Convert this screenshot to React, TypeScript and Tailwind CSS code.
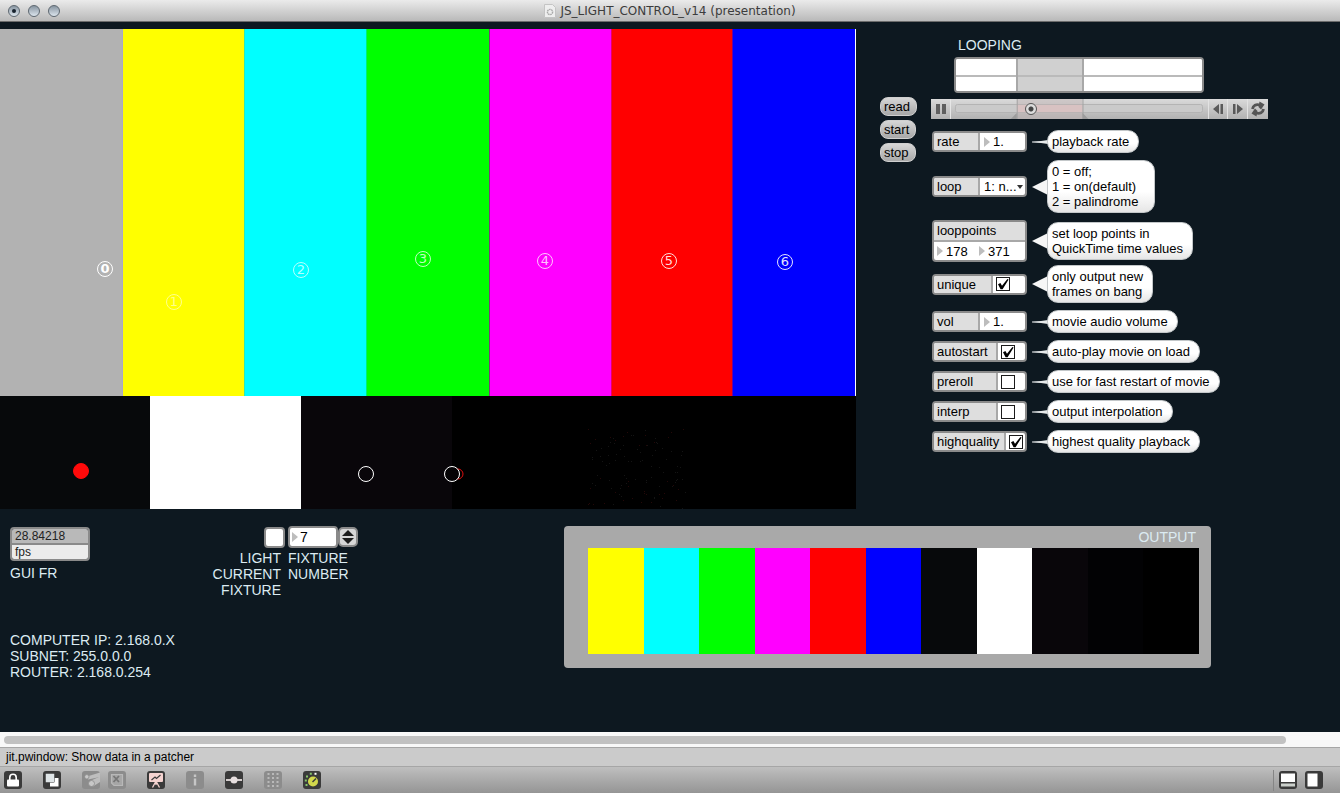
import type { ReactNode } from 'react';

const markers = [
  { label: '0', x: 105, y: 240, tone: 'border-white text-white font-bold' },
  { label: '1', x: 174, y: 273, tone: 'border-[#ffff8c] text-[#ffff8c]' },
  { label: '2', x: 301, y: 241, tone: 'border-[#b4ffff] text-[#b4ffff]' },
  { label: '3', x: 423, y: 230, tone: 'border-[#c0ffc0] text-[#c0ffc0]' },
  { label: '4', x: 545, y: 232, tone: 'border-[#ffc4ff] text-[#ffc4ff]' },
  { label: '5', x: 669, y: 232, tone: 'border-[#ffdcdc] text-[#ffdcdc]' },
  { label: '6', x: 785, y: 233, tone: 'border-[#e4e4ff] text-[#e4e4ff]' },
  { label: '', x: 81, y: 442, tone: 'border-[#ff0a0a] bg-[#ff0a0a]' },
  { label: '', x: 366, y: 445, tone: 'border-white' },
  { label: '', x: 452, y: 445, tone: 'border-white bg-[#040305]' }
];

const outputColors = [
  'bg-[#ffff00]',
  'bg-[#00ffff]',
  'bg-[#00ff00]',
  'bg-[#ff00ff]',
  'bg-[#ff0000]',
  'bg-[#0000ff]',
  'bg-[#07090b]',
  'bg-white',
  'bg-[#09060a]',
  'bg-[#020204]',
  'bg-black'
];

// faint sensor noise in the last tile
const noise = Array.from({ length: 110 }, (_, i) => ({
  x: (i * 37 + ((i * i) % 23)) % 98,
  y: (i * 53 + ((i * i) % 31)) % 80
}));

const frame = 'rounded-[4px] border-2 border-[#8a8a8a]';

const NumberArrow = () => (
  <svg viewBox="0 0 6 10" className="h-[10px] w-[6px] shrink-0" aria-hidden="true">
    <path d="M0 0L6 5L0 10Z" fill="#bdbdbd" />
  </svg>
);

const NumberField = ({ label, value }: { label: string; value: string }) => (
  <span className="flex items-center gap-[3px] pl-[3px]">
    <NumberArrow />
    <input aria-label={label} defaultValue={value} className="w-[30px] bg-transparent leading-[17px] outline-none" />
  </span>
);

const Check = ({ id, checked }: { id: string; checked: boolean }) => (
  <span className="relative block size-[14px]">
    <input
      id={id}
      type="checkbox"
      defaultChecked={checked}
      className="peer block size-[14px] appearance-none border border-[#1a1a1a] bg-white"
    />
    <svg viewBox="0 0 14 14" className="pointer-events-none absolute inset-0 hidden peer-checked:block" aria-hidden="true">
      <path d="M2 7.200L4.400 6L6 8.800L11.400 2L12.600 2.400L6.600 12.200H4.600Z" fill="#000" />
    </svg>
  </span>
);

const Attr = ({ id, name, labelWidth, children }: { id: string; name: string; labelWidth: string; children: ReactNode }) => (
  <div className={`flex h-[21px] w-[95px] shrink-0 overflow-hidden bg-white ${frame}`}>
    <label htmlFor={id} className={`shrink-0 border-r-2 border-[#a8a8a8] bg-[#dedede] pl-[3px] leading-[17px] ${labelWidth}`}>
      {name}
    </label>
    <div className="flex min-w-0 flex-1 items-center">{children}</div>
  </div>
);

const Bubble = ({ lines }: { lines: string[] }) => (
  <div className="flex items-center">
    {lines.length > 1 ? (
      <svg viewBox="0 0 16 16" className="-mr-px h-4 w-4 shrink-0" aria-hidden="true">
        <path d="M0 8L16 0V16Z" fill="#f6f6f6" />
      </svg>
    ) : (
      <svg viewBox="0 0 16 4" className="-mr-px h-1 w-4 shrink-0" aria-hidden="true">
        <path d="M0 1.400L9 1L16 0V4L9 3L0 2.600Z" fill="#e6e9ea" />
      </svg>
    )}
    <p
      className={`rounded-[11px] border border-[#c3c7c9] bg-linear-to-b from-white from-60% to-[#e6e6e6] px-1 py-[3px] leading-[15px] whitespace-nowrap ${lines.length > 2 ? 'pr-4' : 'pr-[9px]'}`}
    >
      {lines.map((line) => (
        <span key={line} className="block">
          {line}
        </span>
      ))}
    </p>
  </div>
);

const CheckAttr = ({ name, labelWidth, checked }: { name: string; labelWidth: string; checked: boolean }) => (
  <Attr id={name} name={name} labelWidth={labelWidth}>
    <span className="pl-[3px]">
      <Check id={name} checked={checked} />
    </span>
  </Attr>
);

const ValueAttr = ({ name, value }: { name: string; value: string }) => (
  <Attr id={name} name={name} labelWidth="w-[46px]">
    <span className="flex items-center gap-[3px] pl-1">
      <NumberArrow />
      <input id={name} defaultValue={value} className="w-7 bg-transparent leading-[17px] outline-none" />
    </span>
  </Attr>
);

const Row = ({ className, lines, children }: { className: string; lines: string[]; children: ReactNode }) => (
  <div className={`flex items-center gap-[5px] ${className}`}>
    {children}
    <Bubble lines={lines} />
  </div>
);

const TitleBar = () => (
  <header className="relative flex h-[22px] items-center justify-center border-b border-[#6c6c6c] bg-linear-to-b from-[#ebebeb] to-[#b9b9b9]">
    <div className="absolute left-2 flex gap-2">
      {['Close', 'Minimize', 'Zoom'].map((name) => (
        <button
          key={name}
          aria-label={name}
          className="flex size-3 items-center justify-center rounded-full border border-[#5d6770] bg-linear-to-b from-[#8895a1] to-[#dde6ee]"
        >
          {name === 'Close' && <span className="size-1 rounded-full bg-[#17222d]" />}
        </button>
      ))}
    </div>
    <svg viewBox="0 0 12 14" className="mr-1 h-[14px] w-3" aria-hidden="true">
      <path d="M.5 .5H8.500L11.500 3.500V13.500H.5Z" fill="#eeeeee" stroke="#c4c4c4" />
      <circle cx="6" cy="8" r="2.600" fill="none" stroke="#a9a9a9" strokeWidth="1.400" strokeDasharray="1.600 .6" />
    </svg>
    <h1 className="font-['DejaVu_Sans',sans-serif] text-[12px] leading-5 text-[#3c3c3c]">JS_LIGHT_CONTROL_v14 (presentation)</h1>
  </header>
);

const Preview = () => (
  <section aria-label="Video preview" className="relative">
    <div className="grid aspect-[856/367] grid-cols-[123fr_121fr_122fr_123fr_122fr_121fr_123fr_1fr]">
      <div className="border-r border-[#aaa8c8] bg-[#b2b2b2]" />
      <div className="bg-[#ffff00]" />
      <div className="border-l border-[#30e8b0] bg-[#00ffff]" />
      <div className="border-l border-[#00f070] bg-[#00ff00]" />
      <div className="border-l border-[#7b3a7b] bg-[#ff00ff]" />
      <div className="border-l border-[#e80068] bg-[#ff0000]" />
      <div className="border-l border-[#780090] bg-[#0000ff]" />
      <div className="bg-white" />
    </div>
    <div className="grid aspect-[856/113] grid-cols-[150fr_151fr_151fr_404fr]">
      <div className="bg-[#07090b]" />
      <div className="bg-white" />
      <div className="bg-[#09060a]" />
      <div className="flex bg-black">
        <svg viewBox="0 0 404 113" className="w-full" aria-hidden="true">
          {noise.map((dot, i) => (
            <rect key={i} x={136 + dot.x} y={33 + dot.y} width="1" height="1" fill={i % 3 ? '#141414' : '#240808'} />
          ))}
        </svg>
      </div>
    </div>
    <span
      className="absolute size-[11px] -translate-x-1/2 -translate-y-1/2 rounded-full border border-[#e01010]"
      style={{ left: `${(458 / 856) * 100}%`, top: `${(445 / 480) * 100}%` }}
    />
    {markers.map((marker) => (
      <span
        key={`${marker.x}-${marker.y}`}
        className={`absolute flex size-4 -translate-x-1/2 -translate-y-1/2 items-center justify-center rounded-full border font-['DejaVu_Sans',sans-serif] text-[13px] leading-3 ${marker.tone}`}
        style={{ left: `${(marker.x / 856) * 100}%`, top: `${(marker.y / 480) * 100}%` }}
      >
        {marker.label}
      </span>
    ))}
  </section>
);

const LoopRange = () => (
  <div className={`ml-[23px] grid h-9 w-[250px] grid-cols-[60fr_68fr_118fr] overflow-hidden bg-white ${frame}`}>
    {['bg-white', 'bg-[#d0d0d0] border-x-2 border-[#a8a8a8]', 'bg-white'].map((tone, i) => (
      <div key={i} className={`grid grid-rows-[18fr_14fr] ${tone}`}>
        <div className="border-b-2 border-[#bababa]" />
      </div>
    ))}
  </div>
);

const Transport = () => (
  <div className="flex h-5 w-[337px] items-stretch bg-linear-to-b from-[#dadada] to-[#b2b2b2]">
    <button aria-label="Pause" className="flex w-5 items-center justify-center border-r border-[#e6e6e6]">
      <svg viewBox="0 0 10 10" className="size-[10px]">
        <path d="M0 0H4V10H0ZM6 0H10V10H6Z" fill="#5f5f5f" />
      </svg>
    </button>
    <div className="relative flex flex-1 items-center px-1">
      <svg viewBox="0 0 258 20" preserveAspectRatio="none" className="absolute inset-0 h-full w-full" aria-hidden="true">
        <rect x="4.500" y="5.500" width="248" height="8" rx="2" fill="#cacaca" stroke="#b4b4b4" />
        <rect x="66" y="0" width="66" height="20" fill="#c0b4b4" opacity=".45" />
        <rect x="66" y="6" width="66" height="7" fill="#d8c2c2" />
        <path d="M66.500 0V20M132.500 0V20" stroke="#a4a4a4" />
        <path d="M66 14V20H60ZM132 14V20H138Z" fill="#9c9c9c" />
      </svg>
      <input
        type="range"
        aria-label="Playback position"
        min={0}
        max={1000}
        defaultValue={295}
        className="relative h-3 w-full appearance-none bg-transparent [&::-webkit-slider-thumb]:size-3 [&::-webkit-slider-thumb]:appearance-none [&::-webkit-slider-thumb]:rounded-full [&::-webkit-slider-thumb]:border [&::-webkit-slider-thumb]:border-[#555] [&::-webkit-slider-thumb]:bg-[radial-gradient(circle,#444_0_2px,#dcdcdc_3px)]"
      />
    </div>
    <button aria-label="Step back" className="flex w-[19px] items-center justify-center border-l border-[#e2e2e2]">
      <svg viewBox="0 0 10 10" className="size-[10px]">
        <path d="M6 0V10L0 5ZM7.500 0H10V10H7.500Z" fill="#5a5a5a" />
      </svg>
    </button>
    <button aria-label="Step forward" className="flex w-5 items-center justify-center border-l border-[#e2e2e2]">
      <svg viewBox="0 0 10 10" className="size-[10px]">
        <path d="M4 0V10L10 5ZM0 0H2.500V10H0Z" fill="#5a5a5a" />
      </svg>
    </button>
    <button aria-label="Loop" className="flex w-[21px] items-center justify-center border-l border-[#e2e2e2]">
      <svg viewBox="0 0 14 16" className="h-4 w-[14px]">
        <path d="M1.500 8C2 4.500 5 2.800 9 4" fill="none" stroke="#555" strokeWidth="2.800" />
        <path d="M8.500 .5L13.500 3.500L10 8.500L7.500 6Z" fill="#555" />
        <path d="M12.500 8C12 11.500 9 13.200 5 12" fill="none" stroke="#555" strokeWidth="2.800" />
        <path d="M5.500 15.500L.5 12.500L4 7.500L6.500 10Z" fill="#555" />
      </svg>
    </button>
  </div>
);

const Controls = () => (
  <section className="flex gap-[14px] pt-2 pl-6 text-[13px] text-black">
    <div className="flex w-[37px] flex-col items-start gap-1 pt-[60px]">
      {['read', 'start', 'stop'].map((name) => (
        <button
          key={name}
          className="h-[19px] rounded-[8px] border border-[#cfcfcf] bg-linear-to-b from-[#d6d6d6] to-[#a8a8a8] px-[3px] pr-1.5 leading-[17px]"
        >
          {name}
        </button>
      ))}
    </div>
    <div>
      <h2 className="ml-[27px] text-[14px] leading-4 text-[#dcebf2]">LOOPING</h2>
      <div className="mt-1">
        <LoopRange />
      </div>
      <div className="mt-1.5">
        <Transport />
      </div>
      <div className="ml-px flex flex-col pt-[11px]">
        <Row className="" lines={['playback rate']}>
          <ValueAttr name="rate" value="1." />
        </Row>
        <Row className="mt-[7px]" lines={['0 = off;', '1 = on(default)', '2 = palindrome']}>
          <Attr id="loop" name="loop" labelWidth="w-[46px]">
            <span className="relative flex flex-1 items-center pl-1">
              <select id="loop" className="w-full appearance-none bg-transparent leading-[17px] outline-none">
                <option>1: n...</option>
              </select>
              <svg viewBox="0 0 6 4" className="pointer-events-none absolute right-0.5 h-1 w-1.5" aria-hidden="true">
                <path d="M0 0H6L3 4Z" fill="#333" />
              </svg>
            </span>
          </Attr>
        </Row>
        <Row className="mt-[7px]" lines={['set loop points in', 'QuickTime time values']}>
          <div className={`w-[95px] shrink-0 overflow-hidden bg-white ${frame}`}>
            <div className="border-b-2 border-[#a8a8a8] bg-[#dedede] pl-[3px] leading-[18px]">looppoints</div>
            <div className="flex h-[18px]">
              <NumberField label="loop start" value="178" />
              <NumberField label="loop end" value="371" />
            </div>
          </div>
        </Row>
        <Row className="mt-[3px]" lines={['only output new', 'frames on bang']}>
          <CheckAttr name="unique" labelWidth="w-[59px]" checked />
        </Row>
        <Row className="mt-[7px]" lines={['movie audio volume']}>
          <ValueAttr name="vol" value="1." />
        </Row>
        <Row className="mt-[7px]" lines={['auto-play movie on load']}>
          <CheckAttr name="autostart" labelWidth="w-[64px]" checked />
        </Row>
        <Row className="mt-[7px]" lines={['use for fast restart of movie']}>
          <CheckAttr name="preroll" labelWidth="w-[64px]" checked={false} />
        </Row>
        <Row className="mt-[7px]" lines={['output interpolation']}>
          <CheckAttr name="interp" labelWidth="w-[64px]" checked={false} />
        </Row>
        <Row className="mt-[7px]" lines={['highest quality playback']}>
          <CheckAttr name="highquality" labelWidth="w-[72px]" checked />
        </Row>
      </div>
    </div>
  </section>
);

const Status = () => (
  <section className="pl-[10px] text-[14px] leading-4 text-[#dcebf2]">
    <div className="flex h-[106px] items-start">
      <div className="w-[193px] pt-px">
        <div className={`w-20 overflow-hidden text-[12px] leading-[14px] text-[#222] ${frame}`}>
          <div className="border-b-2 border-[#8a8a8a] bg-[#b9b9b9] pl-[3px]">28.84218</div>
          <div className="bg-[#ececec] pl-[3px]">fps</div>
        </div>
        <p className="mt-1">GUI FR</p>
      </div>
      <div className="flex w-[82px] flex-col items-end pt-px">
        <div className={`size-[21px] bg-white ${frame}`} />
        <p className="mt-0.5 pr-1 text-right">
          LIGHT
          <br />
          CURRENT
          <br />
          FIXTURE
        </p>
      </div>
      <div className="pl-[3px]">
        <div className="flex items-center">
          <div className={`flex h-[22px] w-[50px] items-center bg-white pl-0.5 ${frame}`}>
            <span className="flex items-center gap-0.5">
              <NumberArrow />
              <input id="fixture" defaultValue="7" className="w-7 bg-transparent leading-[17px] text-black outline-none" />
            </span>
          </div>
          <div className="flex h-5 w-5 flex-col items-center justify-center gap-0.5 rounded-[5px] border-2 border-[#8a8a8a] bg-[#d6d6d6]">
            <button aria-label="Next fixture" className="flex">
              <svg viewBox="0 0 12 6" className="h-1.5 w-3">
                <path d="M0 6L6 0L12 6Z" fill="#1c1c1c" />
              </svg>
            </button>
            <button aria-label="Previous fixture" className="flex">
              <svg viewBox="0 0 12 6" className="h-1.5 w-3">
                <path d="M0 0L6 6L12 0Z" fill="#1c1c1c" />
              </svg>
            </button>
          </div>
        </div>
        <label htmlFor="fixture" className="mt-0.5 block">
          FIXTURE
          <br />
          NUMBER
        </label>
      </div>
    </div>
    <p>COMPUTER IP: 2.168.0.X</p>
    <p>SUBNET: 255.0.0.0</p>
    <p>ROUTER: 2.168.0.254</p>
  </section>
);

const Output = () => (
  <section className="rounded-[4px] bg-[#a9a9a9] pr-3 pb-[14px] pl-6">
    <h2 className="pt-[3px] pr-[3px] pb-[3px] text-right text-[14px] leading-4 text-[#dcebf2]">OUTPUT</h2>
    <div className="grid aspect-[611/106] grid-cols-11">
      {outputColors.map((color) => (
        <div key={color} className={color} />
      ))}
    </div>
  </section>
);

const ToolButton = ({ label, dim, children }: { label: string; dim?: boolean; children: ReactNode }) => (
  <button aria-label={label} className={`size-[18px] shrink-0 rounded-[3px] ${dim ? 'bg-[#8c8c8c]' : 'bg-[#3a3a3a]'}`}>
    <svg viewBox="0 0 18 18" className="size-[18px]">
      {children}
    </svg>
  </button>
);

const Toolbar = () => (
  <div className="flex h-[26px] items-center bg-linear-to-b from-[#bfbfbf] to-[#959595] pr-[17px] pl-1">
    <div className="flex gap-[21px]">
      <ToolButton label="Lock patcher">
        <rect x="3" y="8.500" width="12" height="7" rx="1" fill="#fff" />
        <path d="M5.800 9V6.500A3.200 3.200 0 0 1 12.200 6.500V9" fill="none" stroke="#fff" strokeWidth="1.600" />
      </ToolButton>
      <ToolButton label="New view">
        <rect x="7" y="7" width="8.500" height="8.500" fill="#fff" />
        <rect x="2.500" y="2.500" width="9" height="9" rx="1" fill="#dfe5e7" stroke="#3a3a3a" strokeWidth=".5" />
      </ToolButton>
      <div className="flex gap-2">
        <ToolButton label="Search" dim>
          <path d="M5 5.500L18 1.500V6L6 8.500Z" fill="#bebebe" />
          <path d="M8 10L18 5.500V11L11 15.500Z" fill="#bebebe" />
          <circle cx="4.800" cy="5.800" r="2.200" fill="#c8c8c8" stroke="#8c8c8c" strokeWidth=".8" />
          <circle cx="9.500" cy="12.500" r="3" fill="#c8c8c8" stroke="#8c8c8c" strokeWidth=".8" />
        </ToolButton>
        <ToolButton label="Close view" dim>
          <path d="M3.500 3.500H14.500V14.500H6L3.500 12Z" fill="#a6a6a6" stroke="#b8b8b8" strokeWidth="1.200" />
          <path d="M5.500 5L11 11M11 5L5.500 11" stroke="#767676" strokeWidth="1.800" />
        </ToolButton>
      </div>
      <ToolButton label="Presentation mode">
        <rect x="2" y="2" width="14" height="9" rx="1" fill="#f5d3d0" />
        <path d="M4.500 9L8 6L9.500 7.500L13.500 4" fill="none" stroke="#3a3a3a" strokeWidth="1.200" />
        <path d="M8.500 11L5.500 16.500M9.500 11L12.500 16.500M9 11V14" stroke="#f5d3d0" strokeWidth="1.300" />
      </ToolButton>
      <ToolButton label="Inspector" dim>
        <path d="M9 3.500V6M9 7.500V14.500" stroke="#c6c6c6" strokeWidth="2.400" />
      </ToolButton>
      <ToolButton label="Patch cords">
        <path d="M1 9H17" stroke="#e6dede" strokeWidth="1.800" />
        <circle cx="9" cy="9" r="3.500" fill="#e6dede" />
      </ToolButton>
      <ToolButton label="Grid" dim>
        {[3.5, 7.5, 11.5, 15.5].map((y) =>
          [4.5, 9, 13.5].map((x) => <rect key={`${x}-${y}`} x={x - 1} y={y - 1.5} width="2" height="2" fill="#b9b9b9" />)
        )}
      </ToolButton>
      <ToolButton label="Parameters">
        <circle cx="10" cy="10.500" r="5" fill="#d3d84c" />
        <path d="M9.500 11L13 7.500" stroke="#3a3a3a" strokeWidth="1.500" />
        <path d="M2.500 14H4.500M1.800 9.500H3.800M3 5.500H5M6.800 2.800H8.800" stroke="#86c66a" strokeWidth="2" />
        <path d="M11.500 2.800H13.500" stroke="#fff" strokeWidth="2" />
      </ToolButton>
    </div>
    <div className="ml-auto flex h-[21px] items-center gap-2 border-l border-[#858585] pl-[5px]">
      <ToolButton label="Show clue window">
        <rect x="2" y="2.500" width="14" height="8.500" fill="#fff" />
        <rect x="2" y="12.500" width="14" height="3" fill="#cbd0cb" />
      </ToolButton>
      <ToolButton label="Show sidebar">
        <rect x="2.500" y="2.500" width="10" height="13" fill="#fff" />
      </ToolButton>
    </div>
  </div>
);

const App = () => (
  <div className="flex min-h-screen flex-col bg-[#0d1820] font-['Liberation_Sans',Arial,sans-serif]">
    <TitleBar />
    <main className="flex-1">
      <div className="grid grid-cols-[minmax(0,856fr)_minmax(0,484fr)] pt-[7px]">
        <Preview />
        <Controls />
      </div>
      <div className="grid grid-cols-[564fr_647fr_129fr] items-start pt-[17px] pb-4">
        <Status />
        <Output />
      </div>
    </main>
    <footer>
      <div className="flex h-[15px] items-center bg-[#f8f8f8] pr-[54px] pl-1">
        <div className="h-2 w-full rounded-full bg-[#c1c1c1]" />
      </div>
      <p className="h-5 border-y border-[#a6a6a6] bg-[#cbcbcb] pl-1.5 text-[12px] leading-[18px] text-black">jit.pwindow: Show data in a patcher</p>
      <Toolbar />
    </footer>
  </div>
);

export default App;
